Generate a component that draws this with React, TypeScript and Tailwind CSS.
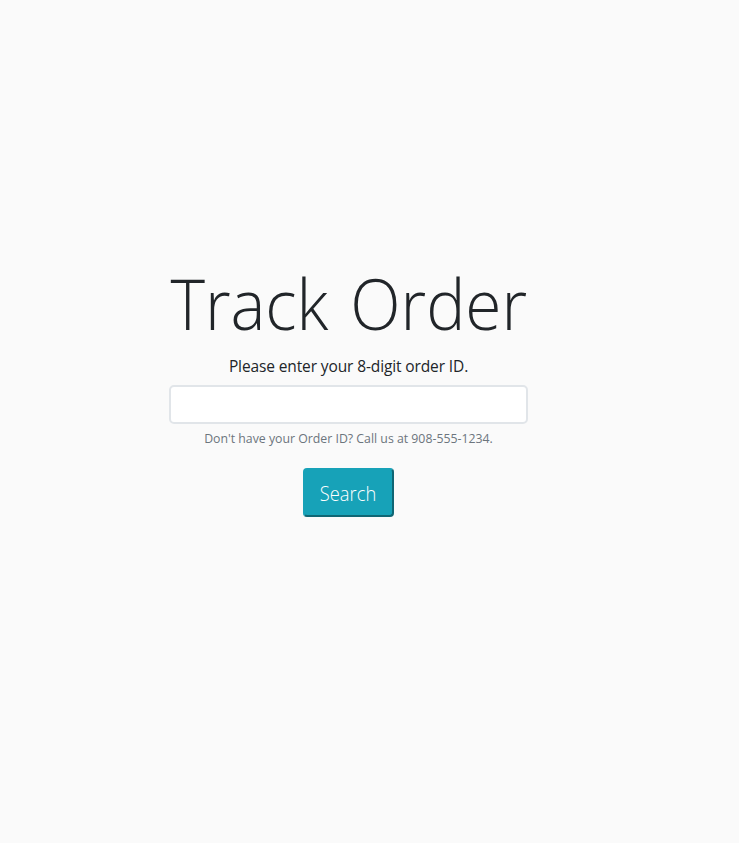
export default function App() {
  return (
    <main className="flex min-h-screen flex-col bg-[#fafafa] pt-[267px] font-['Open_Sans',sans-serif] text-[#212529]">
      <form className="ml-[169px] flex w-[359px] flex-col items-center" onSubmit={(e) => e.preventDefault()}>
        <h1 className="h-[88px] origin-center scale-x-[0.94] whitespace-nowrap text-[70px] font-light leading-[72px] [word-spacing:5px]">Track Order</h1>
        <label htmlFor="order-id" className="h-[30px] whitespace-nowrap text-[15.5px] leading-[22px] tracking-[-0.12px]">Please enter your 8-digit order ID.</label>
        <input id="order-id" className="h-[39px] w-full rounded-[5px] border-2 border-[#e1e5e9] bg-white px-3 outline-none" />
        <small className="mt-1 whitespace-nowrap text-[12.3px] leading-[21px] text-[#6c757d]">Don't have your Order ID? Call us at 908-555-1234.</small>
        <button className="mt-[19px] h-[49px] w-[91px] rounded-[4px] border-2 border-[#17a2b8] border-b-[#0f6674] border-r-[#0f6674] bg-[#17a2b8] pt-[3px] text-[19.5px] font-light text-white">
          <span className="inline-block scale-x-[0.94]">Search</span>
        </button>
      </form>
    </main>
  );
}
